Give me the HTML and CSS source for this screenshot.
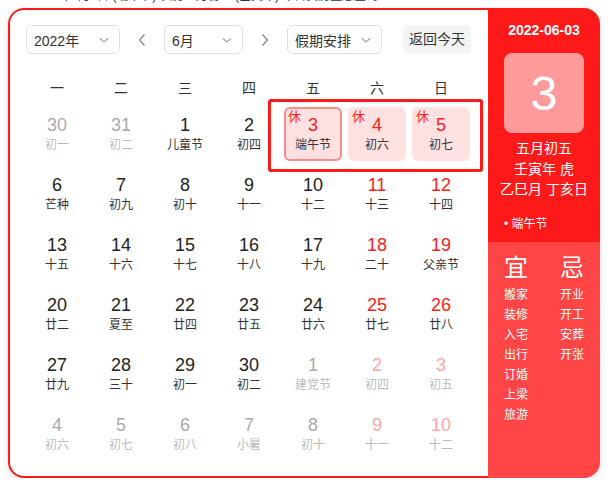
FILE: index.html
```html
<!DOCTYPE html>
<html lang="zh-CN">
<head>
<meta charset="utf-8">
<title>万年历</title>
<link rel="stylesheet" href="styles.css">
</head>
<body>
<div class="page">
  <div class="note">2022年6月3日 (端午节) 农历五月初五 (壬寅年) 今日黄历宜忌查询</div>
  <div class="cal">
    <div class="main">
      <div class="toolbar">
        <div class="select year"><span>2022年</span><svg viewBox="0 0 12 12" class="chev"><path d="M2 4.5 L6 8 L10 4.5"/></svg></div>
        <div class="arrow"><svg viewBox="0 0 10 14"><path d="M7.5 1.5 L2.5 7 L7.5 12.5"/></svg></div>
        <div class="select month"><span>6月</span><svg viewBox="0 0 12 12" class="chev"><path d="M2 4.5 L6 8 L10 4.5"/></svg></div>
        <div class="arrow"><svg viewBox="0 0 10 14"><path d="M2.5 1.5 L7.5 7 L2.5 12.5"/></svg></div>
        <div class="select holiday"><span>假期安排</span><svg viewBox="0 0 12 12" class="chev"><path d="M2 4.5 L6 8 L10 4.5"/></svg></div>
        <div class="today">返回今天</div>
      </div>
      <div class="weekdays">
        <span>一</span><span>二</span><span>三</span><span>四</span><span>五</span><span>六</span><span>日</span>
      </div>
      <div class="days">
        <div class="day other"><span class="num">30</span><span class="lunar">初一</span></div>
        <div class="day other"><span class="num">31</span><span class="lunar">初二</span></div>
        <div class="day"><span class="num">1</span><span class="lunar">儿童节</span></div>
        <div class="day"><span class="num">2</span><span class="lunar">初四</span></div>
        <div class="day rest selected"><span class="tag">休</span><span class="num">3</span><span class="lunar">端午节</span></div>
        <div class="day rest"><span class="tag">休</span><span class="num">4</span><span class="lunar">初六</span></div>
        <div class="day rest"><span class="tag">休</span><span class="num">5</span><span class="lunar">初七</span></div>

        <div class="day"><span class="num">6</span><span class="lunar">芒种</span></div>
        <div class="day"><span class="num">7</span><span class="lunar">初九</span></div>
        <div class="day"><span class="num">8</span><span class="lunar">初十</span></div>
        <div class="day"><span class="num">9</span><span class="lunar">十一</span></div>
        <div class="day"><span class="num">10</span><span class="lunar">十二</span></div>
        <div class="day weekend"><span class="num">11</span><span class="lunar">十三</span></div>
        <div class="day weekend"><span class="num">12</span><span class="lunar">十四</span></div>

        <div class="day"><span class="num">13</span><span class="lunar">十五</span></div>
        <div class="day"><span class="num">14</span><span class="lunar">十六</span></div>
        <div class="day"><span class="num">15</span><span class="lunar">十七</span></div>
        <div class="day"><span class="num">16</span><span class="lunar">十八</span></div>
        <div class="day"><span class="num">17</span><span class="lunar">十九</span></div>
        <div class="day weekend"><span class="num">18</span><span class="lunar">二十</span></div>
        <div class="day weekend"><span class="num">19</span><span class="lunar">父亲节</span></div>

        <div class="day"><span class="num">20</span><span class="lunar">廿二</span></div>
        <div class="day"><span class="num">21</span><span class="lunar">夏至</span></div>
        <div class="day"><span class="num">22</span><span class="lunar">廿四</span></div>
        <div class="day"><span class="num">23</span><span class="lunar">廿五</span></div>
        <div class="day"><span class="num">24</span><span class="lunar">廿六</span></div>
        <div class="day weekend"><span class="num">25</span><span class="lunar">廿七</span></div>
        <div class="day weekend"><span class="num">26</span><span class="lunar">廿八</span></div>

        <div class="day"><span class="num">27</span><span class="lunar">廿九</span></div>
        <div class="day"><span class="num">28</span><span class="lunar">三十</span></div>
        <div class="day"><span class="num">29</span><span class="lunar">初一</span></div>
        <div class="day"><span class="num">30</span><span class="lunar">初二</span></div>
        <div class="day other"><span class="num">1</span><span class="lunar">建党节</span></div>
        <div class="day other weekend"><span class="num">2</span><span class="lunar">初四</span></div>
        <div class="day other weekend"><span class="num">3</span><span class="lunar">初五</span></div>

        <div class="day other"><span class="num">4</span><span class="lunar">初六</span></div>
        <div class="day other"><span class="num">5</span><span class="lunar">初七</span></div>
        <div class="day other"><span class="num">6</span><span class="lunar">初八</span></div>
        <div class="day other"><span class="num">7</span><span class="lunar">小暑</span></div>
        <div class="day other"><span class="num">8</span><span class="lunar">初十</span></div>
        <div class="day other weekend"><span class="num">9</span><span class="lunar">十一</span></div>
        <div class="day other weekend"><span class="num">10</span><span class="lunar">十二</span></div>

        <div class="holiday-frame"></div>
      </div>
    </div>
    <aside class="side">
      <div class="side-top">
        <div class="date">2022-06-03</div>
        <div class="big">3</div>
        <div class="lunar-info">
          <div>五月初五</div>
          <div>壬寅年 虎</div>
          <div>乙巳月 丁亥日</div>
        </div>
        <div class="fest">• 端午节</div>
      </div>
      <div class="side-bottom">
        <div class="col">
          <div class="head">宜</div>
          <div>搬家</div><div>装修</div><div>入宅</div><div>出行</div><div>订婚</div><div>上梁</div><div>旅游</div>
        </div>
        <div class="col">
          <div class="head">忌</div>
          <div>开业</div><div>开工</div><div>安葬</div><div>开张</div>
        </div>
      </div>
    </aside>
  </div>
</div>
</body>
</html>
```

FILE: styles.css
```css
* { box-sizing: border-box; }
html, body { margin: 0; padding: 0; background: #fff; }
body {
  font-family: "Liberation Sans", "Noto Sans CJK SC", sans-serif;
  color: #333;
}
.page { padding: 0 8px; width: 608px; overflow: hidden; }
.note {
  height: 12px;
  margin-top: -10px;
  margin-left: 25px;
  font-size: 12px;
  line-height: 12px;
  color: #333;
  white-space: nowrap;
}
.cal {
  display: flex;
  width: 592px;
  height: 470px;
  margin-top: 6px;
  border-radius: 16px;
  box-shadow: 0 2px 6px rgba(0,0,0,0.14);
}
.main {
  width: 480px;
  height: 470px;
  border: 2px solid #ff1a1a;
  border-right: none;
  border-radius: 16px 0 0 16px;
  padding: 15px 15px 0 15px;
  background: #fff;
}
.toolbar {
  display: flex;
  align-items: center;
  height: 29px;
  padding-left: 1px;
}
.select {
  height: 29px;
  border: 1px solid #dcdfe6;
  border-radius: 6px;
  display: flex;
  align-items: center;
  justify-content: space-between;
  padding: 0 9px 0 7px;
  font-size: 14px;
  color: #333;
}
.year { width: 94px; }
.month { width: 79px; }
.holiday { width: 95px; }
.chev { width: 12px; height: 12px; fill: none; stroke: #a0a4ab; stroke-width: 1.2; }
.arrow {
  width: 44px;
  height: 29px;
  display: flex;
  align-items: center;
  justify-content: center;
}
.arrow svg { width: 10px; height: 14px; fill: none; stroke: #8a8e96; stroke-width: 1.4; }
.today {
  margin-left: 21px;
  width: 68px;
  height: 29px;
  background: #f4f4f5;
  border-radius: 5px;
  font-size: 14px;
  line-height: 29px;
  text-align: center;
  color: #333;
}
.weekdays {
  display: grid;
  grid-template-columns: repeat(7, 64px);
  margin-top: 20px;
  height: 28px;
  line-height: 28px;
  font-size: 14px;
  text-align: center;
  color: #333;
}
.days {
  position: relative;
  display: grid;
  grid-template-columns: repeat(7, 64px);
  grid-auto-rows: 60px;
  margin-top: 2px;
}
.day {
  position: relative;
  margin: 3px;
  border-radius: 6px;
  display: flex;
  flex-direction: column;
  align-items: center;
  justify-content: center;
  padding-bottom: 1px;
}
.num { font-size: 18px; line-height: 22px; color: #222; }
.lunar { font-size: 12px; line-height: 18px; color: #333; }
.weekend .num { color: #ff1a1a; }
.other .num { color: #aaa; }
.other .lunar { color: #bbb; }
.other.weekend .num { color: #ffa6a6; }
.rest { background: #ffe1e1; }
.rest .num { color: #ff1a1a; }
.selected { border: 2px solid #ff8a8a; }
.tag {
  position: absolute;
  left: 4px;
  top: 3px;
  font-size: 13px;
  line-height: 14px;
  color: #ff1a1a;
}
.selected .tag { left: 2px; top: 1px; }
.holiday-frame {
  position: absolute;
  left: 243px;
  top: -5px;
  width: 215px;
  height: 73px;
  border: 3px solid #ff1a1a;
  border-radius: 3px;
}
.side {
  width: 112px;
  height: 470px;
  display: flex;
  flex-direction: column;
  border-radius: 0 16px 16px 0;
  overflow: hidden;
  color: #fff;
}
.side-top {
  height: 234px;
  background: #ff1a1a;
  display: flex;
  flex-direction: column;
  align-items: center;
  padding-top: 13px;
}
.date { font-size: 14px; font-weight: bold; line-height: 18px; }
.big {
  margin-top: 14px;
  width: 80px;
  height: 80px;
  border-radius: 8px;
  background: #ff9a9a;
  font-size: 49px;
  line-height: 80px;
  text-align: center;
}
.lunar-info {
  margin-top: 5px;
  font-size: 14px;
  line-height: 20.5px;
  text-align: center;
}
.fest {
  align-self: flex-start;
  margin-left: 16px;
  margin-top: 16px;
  font-size: 12px;
  line-height: 16px;
}
.side-bottom {
  flex: 1;
  background: #ff4545;
  display: flex;
  padding: 11px 0 0 16px;
}
.col { flex: 0 0 56px; width: 56px; font-size: 12px; line-height: 20px; }
.col .head { font-size: 24px; line-height: 30px; margin-bottom: 2px; }
```
